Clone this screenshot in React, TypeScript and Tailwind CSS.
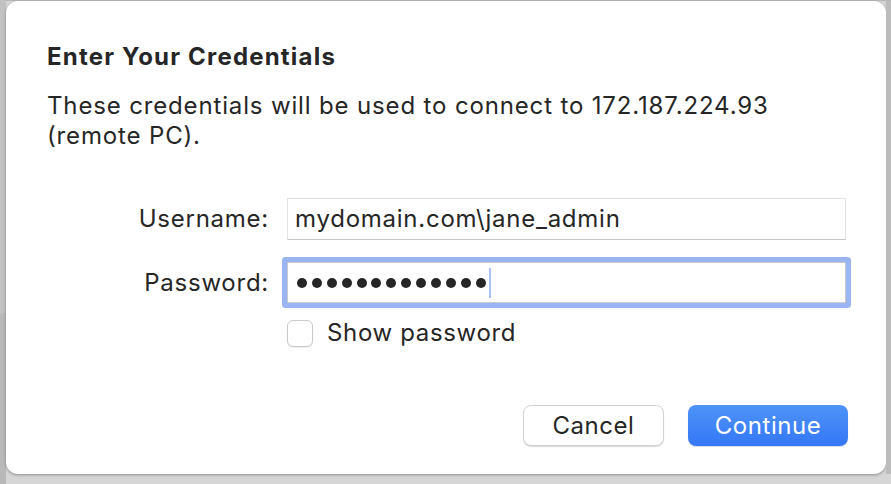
import { useState } from "react";

const font = { fontFamily: "Inter, 'Liberation Sans', sans-serif" };

export default function App() {
  const [showPassword, setShowPassword] = useState(false);
  const dots = Array.from({ length: 13 });

  return (
    <div className="flex h-[484px] w-[891px] bg-[#d6d6d6]" style={font}>
      <div className="flex w-[6px] flex-col">
        <div className="h-[313px] bg-[#c2c2c2]" />
        <div className="flex-1 bg-[#b9b9b9]" />
      </div>
      <div className="flex flex-1 flex-col">
        <div className="h-[1px] bg-[#b8b8b8]" />
        <div className="flex">
          <div className="flex h-[473px] w-[880px] flex-col rounded-[12px] bg-white pl-[41px] pr-[40px] pt-[39px] shadow-[0_1px_3px_rgba(0,0,0,0.35)]">
            <h1 className="text-[24px] leading-[34px] font-bold tracking-[1.2px] text-[#262626]">Enter Your Credentials</h1>
            <p className="mt-[17px] text-[24px] leading-[30px] tracking-[0.85px] text-[#262626]">
              These credentials will be used to connect to 172.187.224.93
              <br />
              (remote PC).
            </p>

            <div className="mt-[47px] grid grid-cols-[222px_559px] items-center gap-x-[18px] gap-y-[22px] text-[24px] tracking-[0.75px] text-[#262626]">
              <label className="text-right">Username:</label>
              <div className="flex h-[42px] items-center border border-[#e3e3e3] border-b-[#c6c6c6] bg-white pl-[7px]">
                mydomain.com\jane_admin
              </div>

              <label className="text-right">Password:</label>
              <div className="flex h-[41px] items-center rounded-[1px] border border-[#c9c9c9] bg-white pl-[9px] ring-[5px] ring-[#9ab5f2]">
                <div className="flex items-center gap-[4.9px]">
                  {dots.map((_, i) => (
                    <span key={i} className="h-[10px] w-[10px] rounded-full bg-[#262626]" />
                  ))}
                </div>
                <span className="ml-[3px] h-[30px] w-[2px] bg-[#a9c1f5]" />
              </div>

              <div />
              <label className="-mt-[10px] flex items-center gap-[14px] tracking-[0.65px]">
                <button
                  onClick={() => setShowPassword(!showPassword)}
                  className="h-[27px] w-[26px] rounded-[6px] border border-[#cacaca] bg-white shadow-[0_1px_1px_rgba(0,0,0,0.08)]"
                >
                  {showPassword ? "✓" : null}
                </button>
                Show password
              </label>
            </div>

            <div className="mt-auto mb-[28px] flex justify-end gap-[24px] text-[24px] tracking-[0.55px]">
              <button className="h-[41px] w-[141px] rounded-[8px] border border-[#d2d2d2] bg-white text-[#262626] shadow-[0_1px_1px_rgba(0,0,0,0.15)]">
                Cancel
              </button>
              <button className="mr-[-2px] h-[41px] w-[160px] rounded-[8px] bg-gradient-to-b from-[#4f93f8] to-[#3477f6] text-white shadow-[0_1px_1px_rgba(0,0,0,0.15)]">
                Continue
              </button>
            </div>
          </div>
          <div className="w-[5px] bg-[#bcbcbc]" />
        </div>
      </div>
    </div>
  );
}
